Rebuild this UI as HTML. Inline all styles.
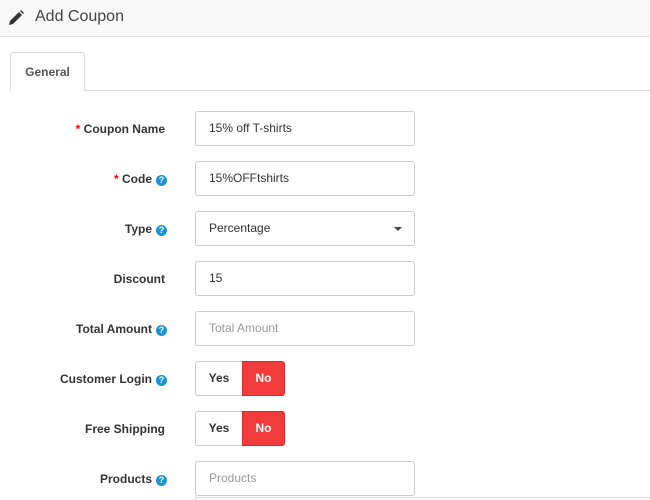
<!DOCTYPE html>
<html><head><style>
*{box-sizing:border-box;margin:0;padding:0}
body{width:650px;height:500px;overflow:hidden;background:#fff;font-family:"Liberation Sans",Arial,sans-serif;color:#333;position:relative}
.hd{position:absolute;left:0;top:0;width:650px;height:37px;background:#f8f8f8;border-bottom:1px solid #e3e3e3}
.hd span{position:absolute;left:35px;top:8px;font-size:16px;color:#444}
.tabline{position:absolute;left:10px;right:0;top:90px;border-top:1px solid #ddd}
.tab{position:absolute;left:10px;top:52px;width:75px;height:39px;border:1px solid #ddd;border-bottom:none;border-radius:3px 3px 0 0;background:#fff;font-size:12px;font-weight:bold;color:#555;text-align:center;line-height:38px}
.lbl{position:absolute;right:485px;font-size:12px;font-weight:bold;color:#333;white-space:nowrap;line-height:14px}
.lbl .r{color:#f00}
.q{display:inline-block;width:11px;height:11px;border-radius:50%;background:#1e91cf;color:#fff;font-size:9px;line-height:11px;text-align:center;vertical-align:0px;margin-left:4px}
.in{position:absolute;left:195px;width:220px;height:35px;border:1px solid #ccc;border-radius:3px;font-size:12px;line-height:33px;padding-left:13px;color:#333}
.ph{color:#999}
.yn{position:absolute;left:195px;width:90px;height:35px;font-size:12px;font-weight:bold}
.yn .y{position:absolute;left:0;top:0;width:47px;height:35px;border:1px solid #ccc;border-right:none;border-radius:3px 0 0 3px;text-align:center;line-height:33px}
.yn .n{position:absolute;left:47px;top:0;width:43px;height:35px;background:#f23b3b;border:1px solid #d82c2c;border-radius:0 3px 3px 0;color:#fff;text-align:center;line-height:33px}
</style></head><body>
<div class="hd"><svg style="position:absolute;left:8px;top:10px" width="16" height="16" viewBox="0 0 16 16"><path d="M1 15 L2 11 L11 2 L14 5 L5 14 Z" fill="#333"/><path d="M12 1 L13 0 L16 3 L15 4 Z" fill="#333"/></svg><span>Add Coupon</span></div>
<div class="tabline"></div>
<div class="tab">General</div>

<div class="lbl" style="top:122px"><span class="r">* </span>Coupon Name</div>
<div class="in" style="top:111px">15% off T-shirts</div>

<div class="lbl" style="top:172px;right:483px"><span class="r">* </span>Code<span class="q">?</span></div>
<div class="in" style="top:161px">15%OFFtshirts</div>

<div class="lbl" style="top:222px;right:483px">Type<span class="q">?</span></div>
<div class="in" style="top:211px">Percentage<span style="position:absolute;right:12px;top:15px;border-left:4px solid transparent;border-right:4px solid transparent;border-top:4px solid #444"></span></div>

<div class="lbl" style="top:272px">Discount</div>
<div class="in" style="top:261px">15</div>

<div class="lbl" style="top:322px;right:483px">Total Amount<span class="q">?</span></div>
<div class="in ph" style="top:311px">Total Amount</div>

<div class="lbl" style="top:372px;right:483px">Customer Login<span class="q">?</span></div>
<div class="yn" style="top:361px"><div class="y">Yes</div><div class="n">No</div></div>

<div class="lbl" style="top:422px">Free Shipping</div>
<div class="yn" style="top:411px"><div class="y">Yes</div><div class="n">No</div></div>

<div class="lbl" style="top:472px;right:483px">Products<span class="q">?</span></div>
<div class="in ph" style="top:461px">Products</div>
<div style="position:absolute;left:195px;top:497px;width:455px;height:3px;border-top:1px solid #ddd;border-left:1px solid #ddd"></div>
</body></html>
